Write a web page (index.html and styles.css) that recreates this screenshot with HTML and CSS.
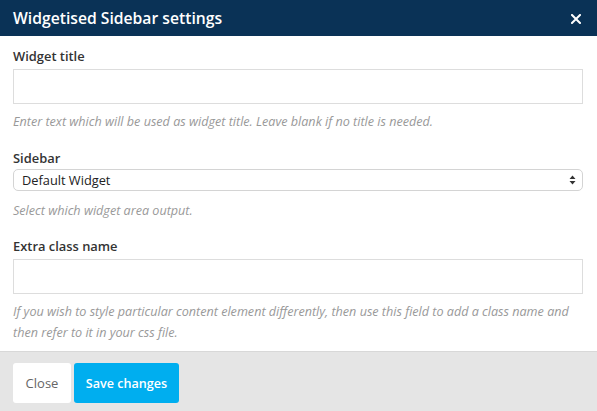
FILE: index.html
```html
<!DOCTYPE html>
<html>
<head>
<meta charset="utf-8">
<link rel="stylesheet" href="styles.css">
</head>
<body>
<div class="modal">
  <div class="modal-header">
    <h1 class="modal-title">Widgetised Sidebar settings</h1>
    <span class="close-x">
      <svg width="10" height="10" viewBox="0 0 10 10"><path d="M1 1L9 9M9 1L1 9" stroke="#fff" stroke-width="2" stroke-linecap="square"/></svg>
    </span>
  </div>
  <div class="modal-body">
    <div class="field">
      <label class="label">Widget title</label>
      <div class="input"></div>
      <p class="help">Enter text which will be used as widget title. Leave blank if no title is needed.</p>
    </div>
    <div class="field field-select">
      <label class="label">Sidebar</label>
      <div class="select">
        <span>Default Widget</span>
        <svg width="7" height="10" viewBox="0 0 7 10"><path d="M3.5 0.5L6.5 4H0.5Z M3.5 9.5L6.5 6H0.5Z" fill="#333"/></svg>
      </div>
      <p class="help">Select which widget area output.</p>
    </div>
    <div class="field">
      <label class="label">Extra class name</label>
      <div class="input"></div>
      <p class="help">If you wish to style particular content element differently, then use this field to add a class name and then refer to it in your css file.</p>
    </div>
  </div>
  <div class="modal-footer">
    <button class="btn btn-default">Close</button>
    <button class="btn btn-primary">Save changes</button>
  </div>
</div>
</body>
</html>
```
FILE: styles.css
```css
html, body {
  margin: 0;
  padding: 0;
  background: #fff;
}
body {
  font-family: "Open Sans", "Liberation Sans", sans-serif;
  width: 597px;
  height: 411px;
  overflow: hidden;
}
.modal {
  display: flex;
  flex-direction: column;
  height: 411px;
}
.modal-header {
  flex-shrink: 0;
  background: #0a3256;
  height: 36px;
  display: flex;
  align-items: center;
  justify-content: space-between;
  padding: 0 16px 0 13px;
}
.modal-title {
  margin: 0;
  color: #fff;
  font-size: 15.7px;
  font-weight: 600;
  line-height: 20px;
}
.close-x {
  display: flex;
  align-items: center;
  margin-top: 1px;
}
.modal-body {
  padding: 12px 14px 0 13px;
  flex: 1;
  min-height: 0;
  overflow: hidden;
}
.field {
  display: flex;
  flex-direction: column;
}
.label {
  font-size: 12.9px;
  font-weight: 600;
  color: #333;
  line-height: 16px;
  margin-bottom: 5px;
}
.field-select .label {
  margin-bottom: 3px;
}
.input {
  height: 33px;
  border: 1px solid #ddd;
  background: #fff;
}
.select {
  height: 20px;
  border: 1px solid #d4d4d4;
  border-radius: 5px;
  display: flex;
  align-items: center;
  justify-content: space-between;
  padding: 0 6px 0 8px;
  font-size: 12.8px;
  color: #222;
}
.help {
  margin: 7px 0 18px;
  font-size: 12.6px;
  font-style: italic;
  color: #999;
  line-height: 21px;
}
.field-select .help {
  margin: 9px 0 17px;
}
.modal-footer {
  flex-shrink: 0;
  background: #e5e5e5;
  border-top: 1px solid #d8d8d8;
  height: 60px;
  padding: 11px 13px 0;
  box-sizing: border-box;
  display: flex;
  align-items: flex-start;
  gap: 3px;
}
.btn {
  height: 40px;
  border: none;
  border-radius: 3px;
  font-family: "Open Sans", "Liberation Sans", sans-serif;
  font-size: 13px;
  padding: 0;
  white-space: nowrap;
  cursor: pointer;
}
.btn-default {
  background: #fff;
  color: #666;
  width: 58px;
}
.btn-primary {
  background: #00aeef;
  color: #fff;
  font-weight: 600;
  font-size: 12.6px;
  width: 105px;
}
```
